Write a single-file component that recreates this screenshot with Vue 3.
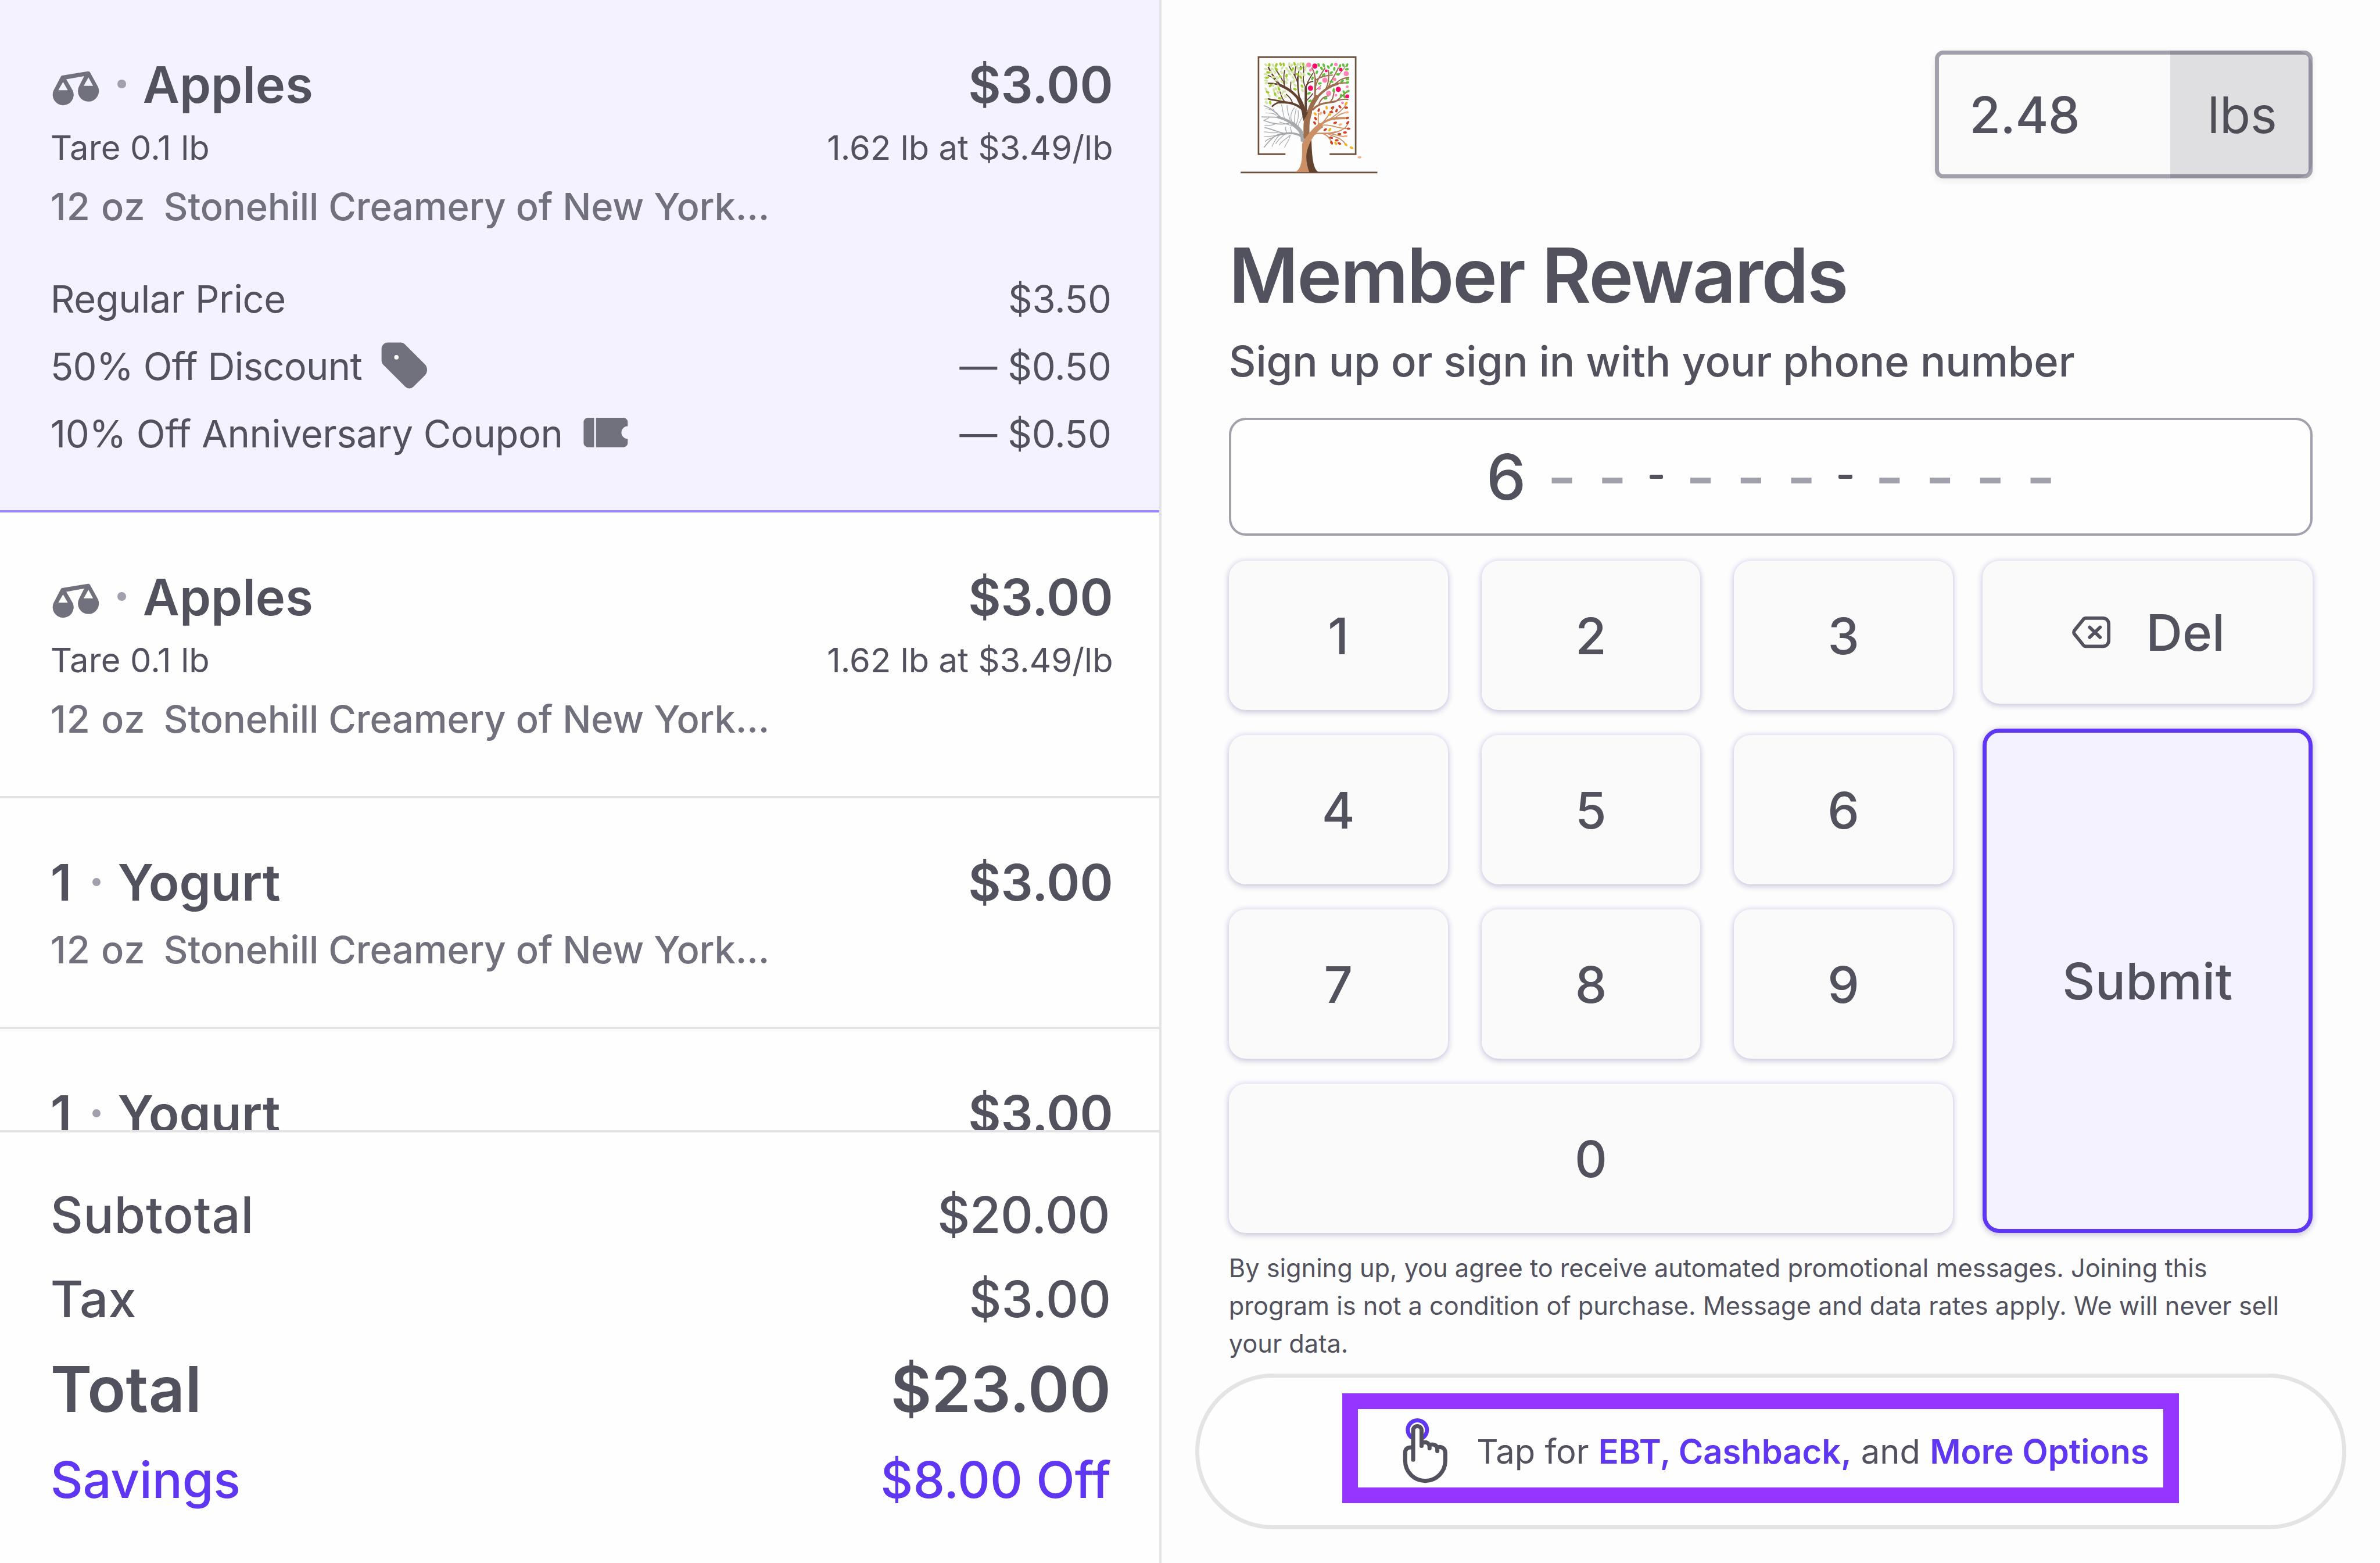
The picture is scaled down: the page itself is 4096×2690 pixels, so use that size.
<template>
  <div class="checkout">
    <section class="cart">
      <div class="cart-items">
        <article
          v-for="(item, index) in items"
          :key="index"
          class="item"
          :class="{ 'item-active': item.active }"
        >
          <div class="item-head">
            <svg v-if="item.weighed" class="icon" viewBox="0 0 24 24">
              <path
                fill="currentColor"
                fill-rule="evenodd"
                d="M5.5 8 17.8 6q.7-.1 1 .5l3.7 6.7A5 5 0 1 1 13.6 13.1L16 8.3 7.5 9.8l3.1 5.4A5 5 0 1 1 1.5 15L4.8 8.7q.2-.6.7-.7ZM5.95 11.1 3.7 15h4.5ZM18.05 8.9l-2.3 4h4.5Z"
              />
            </svg>
            <span v-else class="item-qty">{{ item.qty }}</span>
            <span class="dot"></span>
            <h3 class="item-name">{{ item.name }}</h3>
            <span class="item-price">{{ item.price }}</span>
          </div>
          <div v-if="item.weighed" class="item-tare">
            <span>Tare 0.1 lb</span>
            <span class="item-rate">1.62 lb at $3.49/lb</span>
          </div>
          <div class="item-detail">
            <span class="item-size">12 oz</span>
            <span>Stonehill Creamery of New York...</span>
          </div>
          <div v-if="item.active" class="discounts">
            <div class="discount">
              <span>Regular Price</span>
              <span class="discount-amount">$3.50</span>
            </div>
            <div class="discount">
              <span class="discount-tight">50% Off Discount</span>
              <svg class="icon" viewBox="0 0 24 24">
                <path
                  fill="currentColor"
                  d="M4 1h6.3a2.6 2.6 0 0 1 1.8.8l9.5 9.5a3.9 3.9 0 0 1 0 5.4l-5.4 5.3a2.7 2.7 0 0 1-3.9 0L1.9 11.6A2.9 2.9 0 0 1 1 9.5V4a3 3 0 0 1 3-3Z"
                />
                <circle cx="8.1" cy="8" r="1.05" fill="#ffffff" />
              </svg>
              <span class="discount-amount">— $0.50</span>
            </div>
            <div class="discount">
              <span>10% Off Anniversary Coupon</span>
              <svg class="icon" viewBox="0 0 24 24">
                <path fill="currentColor" d="M3.5 5h3v14h-3a2 2 0 0 1-2-2V7a2 2 0 0 1 2-2Z" />
                <path
                  fill="currentColor"
                  d="M7.4 5h13.1a2 2 0 0 1 2 2v2a3 3 0 0 0 0 6v2a2 2 0 0 1-2 2H7.4Z"
                />
              </svg>
              <span class="discount-amount">— $0.50</span>
            </div>
          </div>
        </article>
      </div>

      <footer class="totals">
        <div v-for="row in totals" :key="row.label" class="total-row" :class="row.type">
          <span>{{ row.label }}</span>
          <span>{{ row.value }}</span>
        </div>
      </footer>
    </section>

    <section class="rewards">
      <header class="rewards-header">
        <svg class="logo" viewBox="120 108 900 720">
          <g fill="none" stroke="#6d4e38" stroke-width="9">
            <path d="M443 700H289V146H844V700H695" />
            <path d="M187 805H968" />
          </g>

          <!-- winter -->
          <g fill="none" stroke="#a7aaad" stroke-linecap="round">
            <path stroke-width="22" d="M541 620C540 565 515 550 482 525" />
            <path stroke-width="14" d="M520 560C480 515 440 500 400 488" />
            <path stroke-width="12" d="M535 600C500 572 440 580 400 590" />
            <path stroke-width="6" d="M440 505C400 480 350 490 308 487M420 495C390 465 360 435 322 424M470 520C420 540 350 520 322 508M400 590C370 600 345 630 322 660M430 580C390 570 360 555 326 548" />
            <path stroke-width="4" d="M400 470C380 450 340 440 330 440M390 478C370 460 350 468 330 464M350 490C340 500 325 502 318 506M380 530C360 535 340 540 325 537M400 575C370 585 340 572 322 572M390 592C360 600 340 596 322 600M380 600C360 612 340 610 328 628M410 590C385 610 375 640 366 656M440 585C410 610 395 625 388 640M470 590C450 615 420 620 408 648M470 595C462 630 448 636 438 660M440 500C425 470 430 440 420 418M470 510C465 480 450 450 452 420M480 515C465 480 480 450 494 435M495 530C490 490 500 465 504 440M505 530C515 500 520 480 515 450M515 540C520 515 535 500 540 486M480 540C470 530 440 530 410 516M430 500C420 485 400 490 370 440M445 545C440 560 445 565 450 575M470 545C475 560 475 570 480 578" />
          </g>

          <!-- spring -->
          <g fill="none" stroke="#63432f" stroke-linecap="round">
            <path stroke-width="24" d="M553 490C550 450 538 420 520 385" />
            <path stroke-width="15" d="M528 400C500 355 460 325 410 305" />
            <path stroke-width="13" d="M545 450C505 405 450 402 410 404" />
            <path stroke-width="13" d="M559 470V320" />
            <path stroke-width="9" d="M523 385C515 340 512 300 513 260M415 308C390 280 370 255 346 205M430 312C400 296 370 296 346 296M420 404C395 402 380 415 368 426M440 402C405 395 375 390 346 385" />
            <path stroke-width="6" d="M513 280C515 240 520 215 530 198M510 285C500 250 480 230 464 198M498 255C495 230 498 215 502 200M438 312C435 280 395 230 384 210M438 300C432 270 434 240 438 222M474 335C470 315 473 300 474 288M395 292C380 265 360 255 344 250M559 320C535 280 550 240 547 200M560 325C565 290 580 270 598 240M563 310C570 295 585 285 600 284M563 395C575 380 590 370 598 354M440 402C420 380 418 360 412 344M485 412C475 380 465 375 448 358" />
          </g>

          <!-- summer -->
          <g fill="none" stroke="#9c6e4d" stroke-linecap="round">
            <path stroke-width="34" d="M563 600C563 540 560 510 578 460" />
            <path stroke-width="26" d="M572 500C582 440 595 410 620 375" />
            <path stroke-width="14" d="M605 400C640 350 690 310 740 298" />
            <path stroke-width="11" d="M600 445C640 400 690 410 730 398" />
            <path stroke-width="10" d="M608 400C615 350 612 310 614 270" />
            <path stroke-width="7" d="M730 300C755 290 780 294 800 292M720 305C750 275 770 265 804 262M685 325C700 280 730 245 744 208M614 280C612 245 605 225 594 208M616 310C625 270 650 240 668 208M620 275C645 255 680 250 710 248M675 325C690 290 692 250 688 222M710 402C745 395 770 380 800 388M735 395C760 375 780 355 792 345M700 400C720 380 715 360 722 340M635 410C650 380 665 370 690 366" />
            <path stroke-width="4" d="M614 335C625 325 635 320 645 308M745 250C760 230 775 215 785 200" />
          </g>

          <!-- trunk and autumn -->
          <path fill="#63432f" d="M544 515C546 485 540 470 536 450L572 460C566 480 552 495 544 515Z" />
          <path fill="#63432f" d="M580 600H591C593 700 598 785 633 803H556C548 720 560 640 580 600Z" />
          <path fill="#cd8f66" d="M497 803C545 780 537 700 538 640C560 600 590 560 640 520L660 545C620 570 590 610 575 655C555 700 560 750 579 803Z" />
          <g fill="none" stroke="#cd8f66" stroke-linecap="round">
            <path stroke-width="13" d="M635 540C675 500 720 492 780 494" />
            <path stroke-width="9" d="M610 584C640 575 680 590 730 574" />
            <path stroke-width="6" d="M660 515C690 480 700 460 718 436M700 497C740 470 775 440 788 418M730 490C750 470 770 465 795 461M632 535C628 505 630 490 632 466M650 535C690 525 730 550 790 553M720 577C760 570 790 550 798 528M700 583C740 590 760 600 786 600M660 584C690 595 690 610 712 634M690 586C730 605 760 605 786 642" />
          </g>

          <g v-for="group in leaves" :key="group.color" :fill="group.color">
            <ellipse
              v-for="([x, y, angle], i) in group.at"
              :key="i"
              rx="11"
              ry="6.5"
              :transform="`translate(${x} ${y}) rotate(${angle})`"
            />
          </g>
          <circle
            v-for="([x, y, r, color], i) in blossoms"
            :key="i"
            :cx="x"
            :cy="y"
            :r="r"
            :fill="color"
          />
        </svg>

        <div class="scale">
          <span class="scale-value">2.48</span>
          <span class="scale-unit">lbs</span>
        </div>
      </header>

      <h1 class="title">Member Rewards</h1>
      <p class="subtitle">Sign up or sign in with your phone number</p>

      <div class="phone">
        <template v-for="(char, i) in phone" :key="i">
          <span v-if="char === '|'" class="phone-separator"></span>
          <span v-else :class="{ 'phone-empty': char === '-' }">{{ char }}</span>
        </template>
      </div>

      <div class="keypad">
        <div class="digits">
          <button v-for="n in digits" :key="n" class="key key-digit" :class="{ 'key-zero': n === 0 }">
            {{ n }}
          </button>
        </div>
        <div class="actions">
          <button class="key key-delete">
            <svg
              class="delete-icon"
              viewBox="0 0 20 20"
              fill="none"
              stroke="currentColor"
              stroke-width="1.6"
              stroke-linecap="round"
              stroke-linejoin="round"
            >
              <path d="M7.4 3.3h8.2a2.7 2.7 0 0 1 2.7 2.7v8a2.7 2.7 0 0 1-2.7 2.7H7.4a1.6 1.6 0 0 1-1.2-.6L2 10.9a1.4 1.4 0 0 1 0-1.8l4.2-5.2a1.6 1.6 0 0 1 1.2-.6Z" />
              <path d="m9.2 7.6 5 4.8M14.2 7.6l-5 4.8" />
            </svg>
            Del
          </button>
          <button class="key key-submit">Submit</button>
        </div>
      </div>

      <p class="disclaimer">
        By signing up, you agree to receive automated promotional messages. Joining this
        program is not a condition of purchase. Message and data rates apply. We will never sell
        your data.
      </p>

      <div class="more">
        <svg
          class="tap-icon"
          viewBox="0 0 32 32"
          fill="none"
          stroke="currentColor"
          stroke-width="1.95"
          stroke-linecap="round"
          stroke-linejoin="round"
        >
          <path class="tap-ring" d="M8.7 9.2a4.55 4.55 0 1 1 6 0" />
          <path d="M9.7 20V6a2 2 0 0 1 4 0v7.4" />
          <path d="M14.2 12c1.6-.8 3.3.1 3.3 1.8v.8M17.8 12.9c1.7-.6 3.4.3 3.4 2v1M21.5 14.1c1.9-.6 3.5.7 3.5 2.6v3.8a9.55 9.55 0 0 1-19.1 0v-4c0-1.6 1-2.4 2.8-2.4" />
        </svg>
        <p class="more-text">
          Tap for <strong>EBT, Cashback,</strong> and <strong>More Options</strong>
        </p>
        <div class="highlight"></div>
      </div>
    </section>
  </div>
</template>

<script setup>
const items = [
  { name: 'Apples', price: '$3.00', weighed: true, active: true },
  { name: 'Apples', price: '$3.00', weighed: true },
  { name: 'Yogurt', price: '$3.00', qty: 1 },
  { name: 'Yogurt', price: '$3.00', qty: 1 }
]

const totals = [
  { label: 'Subtotal', value: '$20.00', type: 'subtotal' },
  { label: 'Tax', value: '$3.00', type: 'tax' },
  { label: 'Total', value: '$23.00', type: 'total' },
  { label: 'Savings', value: '$8.00 Off', type: 'savings' }
]

// '|' is the separator between groups of the number
const phone = '6--|---|----'.split('')

const digits = [1, 2, 3, 4, 5, 6, 7, 8, 9, 0]

// x, y, angle
const leaves = [
  {
    color: '#d3e3a9',
    at: [
      [332, 190, 40], [372, 192, 60], [332, 214, 20], [368, 214, 30], [388, 198, 130], [330, 243, 10],
      [332, 262, 0], [332, 279, 5], [334, 293, -20], [360, 232, 50], [382, 232, 60], [372, 260, 20],
      [396, 262, 40], [392, 278, 20], [420, 232, 60], [424, 208, 120], [450, 212, 60], [464, 186, 100],
      [478, 192, 120], [512, 188, 110], [528, 184, 120], [484, 232, 50], [468, 243, 20], [462, 226, 40],
      [512, 208, 60], [532, 240, 60], [556, 214, 70], [562, 196, 110], [452, 272, 50], [422, 286, 50],
      [486, 262, 60], [484, 288, 30], [498, 306, 40], [492, 282, 120], [536, 282, 70], [540, 336, 60],
      [526, 214, 120], [374, 306, 110], [376, 334, 80], [388, 326, 60], [400, 348, 80], [390, 366, 60],
      [436, 342, 0], [424, 354, 130], [442, 370, 60], [332, 330, 60], [350, 366, 60], [334, 386, 0],
      [334, 406, 40], [402, 312, 60], [448, 290, 60], [550, 246, 80]
    ]
  },
  {
    color: '#9fca2a',
    at: [
      [351, 190, 90], [391, 190, 110], [415, 186, 70], [433, 188, 80], [344, 233, 15], [338, 263, -15],
      [391, 214, 40], [413, 256, 50], [449, 252, 100], [484, 214, 120], [495, 184, 70], [545, 187, 85],
      [533, 209, 120], [530, 260, 60], [512, 243, 0], [357, 309, -40], [341, 346, 30], [383, 356, 80],
      [406, 328, 60], [411, 381, 15], [356, 406, 80], [497, 329, 25], [538, 312, 60]
    ]
  },
  {
    color: '#5fbf3a',
    at: [
      [633, 190, 70], [662, 192, 70], [649, 210, 60], [688, 202, 60], [706, 190, 120], [722, 212, 95],
      [774, 192, 70], [795, 191, 110], [754, 196, 110], [794, 215, -15], [705, 234, -30], [743, 244, 5],
      [661, 246, -30], [622, 232, 110], [577, 242, 35], [597, 267, 110], [706, 286, 10], [767, 283, -30],
      [797, 272, -15], [797, 290, -10], [639, 296, -10], [577, 352, -25], [583, 396, -30], [672, 381, -15],
      [718, 334, 105], [760, 366, 100], [777, 346, 60], [799, 341, -25], [780, 371, 60]
    ]
  },
  {
    color: '#cf4527',
    at: [
      [712, 434, -30], [754, 429, 50], [790, 434, -5], [633, 448, 105], [735, 451, 110], [705, 460, 10],
      [665, 461, 80], [796, 493, -15], [615, 497, 60], [610, 522, 55], [727, 521, -20], [799, 520, -50],
      [670, 560, -35], [803, 554, 0], [783, 576, -5], [751, 585, 0], [704, 606, 20], [736, 621, -5],
      [706, 635, 60], [751, 639, 25]
    ]
  },
  {
    color: '#f2b41c',
    at: [
      [790, 410, -50], [678, 434, 85], [613, 470, 40], [695, 474, 10], [696, 560, 120], [730, 638, 60],
      [788, 645, 45], [820, 663, 25]
    ]
  },
  {
    color: '#fbb184',
    at: [[644, 467, -40], [794, 461, -5], [756, 531, -20], [786, 597, 0], [866, 718, -5]]
  }
]

// x, y, radius, color
const blossoms = [
  [576, 190, 14, '#ff84b3'], [611, 197, 15, '#fb0a6a'], [586, 220, 8, '#ff84b3'], [731, 188, 10, '#ff84b3'],
  [676, 224, 8, '#fb0a6a'], [759, 217, 10, '#fb0a6a'], [790, 240, 15, '#ff84b3'], [668, 277, 15, '#ff84b3'],
  [724, 272, 10, '#ff84b3'], [586, 323, 15, '#fb0a6a'], [636, 324, 9, '#ff84b3'], [745, 330, 15, '#fb0a6a'],
  [796, 315, 8, '#ff84b3'], [690, 353, 15, '#ff84b3'], [731, 363, 8, '#ff84b3'], [796, 370, 11, '#fb0a6a'],
  [769, 407, 8, '#ff84b3']
]
</script>

<style>
html {
  /* 1rem = 10 units of the 1133 wide tablet layout */
  font-size: calc(100vw / 113.3);
}

body {
  margin: 0;
}
</style>

<style scoped>
* {
  box-sizing: border-box;
}

.checkout {
  display: flex;
  width: 100vw;
  height: 100vh;
  overflow: hidden;
  background: #fdfdfd;
  color: #52525e;
  font-family: 'Inter', sans-serif;
  font-size: 2.4rem;
}

h1,
h3,
p {
  margin: 0;
}

.cart {
  display: flex;
  flex-direction: column;
  flex: none;
  width: 55.3rem;
  background: #fefefe;
  border-right: 4px solid #e4e4e7;
}

.cart-items {
  flex: 1;
  min-height: 0;
  overflow: hidden;
}

.item {
  display: flex;
  flex-direction: column;
  gap: 0.2rem;
  padding: 2.4rem 2.2rem calc(2.4rem - 4px) 2.4rem;
  border-bottom: 4px solid #e4e4e7;
}

.item-active {
  background: #f4f2ff;
  border-bottom-color: #9b89fd;
}

.item-head {
  display: flex;
  align-items: center;
  height: 3.2rem;
  line-height: 3.2rem;
  font-weight: 600;
}

.icon {
  flex: none;
  width: 2.4rem;
  height: 2.4rem;
  color: #71717e;
}

.item-qty {
  width: 1.2rem;
}

.dot {
  width: 0.4rem;
  height: 0.4rem;
  margin: 0 0.8rem;
  border-radius: 50%;
  background: #a1a1ae;
}

.item-name {
  font-size: 2.4rem;
  font-weight: 600;
}

.item-price {
  margin-left: auto;
}

.item-qty,
.item-name,
.item-price {
  padding-top: 0.06rem;
}

.item-tare {
  display: flex;
  justify-content: space-between;
  height: 2.4rem;
  font-size: 1.6rem;
  line-height: 2.44rem;
  letter-spacing: 0.005rem;
}

.item-rate {
  letter-spacing: 0.002rem;
}

.item-detail {
  display: flex;
  gap: 0.86rem;
  height: 2.8rem;
  color: #71717e;
  font-size: 1.8rem;
  font-weight: 500;
  line-height: 2.88rem;
  letter-spacing: -0.006rem;
}

.item-size {
  letter-spacing: 0.026rem;
}

.discounts {
  display: flex;
  flex-direction: column;
  gap: 0.4rem;
  margin-top: 1.4rem;
}

.discount {
  display: flex;
  align-items: center;
  gap: 0.84rem;
  height: 2.8rem;
  padding-right: 0.08rem;
  font-size: 1.8rem;
  letter-spacing: -0.011rem;
}

.discount span {
  padding-top: 0.08rem;
}

.discount-tight {
  letter-spacing: -0.02rem;
}

.discount-amount {
  margin-left: auto;
  letter-spacing: -0.006rem;
}

.totals {
  display: flex;
  flex-direction: column;
  gap: 0.8rem;
  flex: none;
  height: 20.6rem;
  padding: calc(2.43rem - 4px) 2.3rem 0 2.4rem;
  background: #fefefe;
  border-top: 4px solid #e4e4e7;
  font-weight: 500;
}

.total-row {
  display: flex;
  justify-content: space-between;
  line-height: 3.2rem;
}

.subtotal {
  padding-right: 0.05rem;
}

.subtotal span:first-child {
  letter-spacing: 0.022rem;
}

.subtotal span:last-child {
  letter-spacing: -0.01rem;
}

.total {
  font-size: 3rem;
  font-weight: 600;
  line-height: 3.8rem;
}

.total span:first-child {
  letter-spacing: 0.01rem;
}

.savings {
  color: #5f37f3;
}

.savings span:first-child {
  letter-spacing: -0.005rem;
}

.rewards {
  display: flex;
  flex-direction: column;
  flex: 1;
  padding: 2.4rem 3.2rem 0;
}

.rewards-header {
  display: flex;
  justify-content: space-between;
  align-items: flex-start;
  height: 6.1rem;
}

.logo {
  width: 7.5rem;
  height: 6rem;
}

.scale {
  display: flex;
  width: 18rem;
  height: 6.1rem;
  border: 7px solid #a1a1ae;
  border-radius: 0.4rem;
  background: #fafafb;
  box-shadow: 0 0.1rem 0.3rem rgba(24, 24, 40, 0.08);
  line-height: calc(6.16rem - 14px);
}

.scale-value {
  flex: 1;
  padding-left: 1.46rem;
  font-weight: 500;
  letter-spacing: -0.01rem;
}

/* tints the frame as well as the field */
.scale-unit {
  width: 6.8rem;
  margin: -7px;
  padding-left: 0.08rem;
  border-radius: 0 0.8rem 0.8rem 0;
  background: rgba(10, 10, 30, 0.11);
  color: #4e4e59;
  line-height: 6.16rem;
  text-align: center;
}

.title {
  margin-top: 2.4rem;
  font-size: 3.6rem;
  font-weight: 600;
  line-height: 4.4rem;
  letter-spacing: -0.071rem;
}

.subtitle {
  margin-top: 0.5rem;
  font-size: 2rem;
  font-weight: 500;
  line-height: 2.8rem;
  letter-spacing: -0.003rem;
}

.phone {
  display: flex;
  align-items: center;
  justify-content: center;
  gap: 1.012rem;
  height: 5.6rem;
  margin-top: 1.3rem;
  border: 4px solid #a1a1ae;
  border-radius: 0.8rem;
  background: #fefefe;
  font-size: 3rem;
  font-weight: 500;
}

.phone-empty {
  color: #a1a1ae;
}

.phone-separator {
  width: 0.65rem;
  height: 0.21rem;
  margin: 0 0.07rem;
  border-radius: 0.06rem;
  background: #52525e;
}

.keypad {
  display: flex;
  gap: 1.4rem;
  height: 32rem;
  margin-top: 1.2rem;
}

.digits {
  display: grid;
  grid-template-columns: repeat(3, 1fr);
  grid-template-rows: repeat(4, 1fr);
  column-gap: 1.6rem;
  row-gap: 1.2rem;
  width: 34.47rem;
}

.actions {
  display: flex;
  flex-direction: column;
  flex: 1;
  gap: 1.2rem;
}

.key {
  display: flex;
  align-items: center;
  justify-content: center;
  margin: 0;
  padding: 0;
  border: none;
  border-radius: 0.8rem;
  background: #fafafb;
  box-shadow:
    0 0 0.3rem rgba(95, 55, 243, 0.15),
    0 0.1rem 0.3rem rgba(39, 39, 80, 0.19);
  color: inherit;
  font-family: inherit;
  font-size: 2.4rem;
  font-weight: 500;
}

.key-digit {
  padding-top: 0.06rem;
}

.key-zero {
  grid-column: span 3;
}

.key-delete {
  gap: 1.6rem;
  height: 6.8rem;
}

.delete-icon {
  width: 2rem;
  height: 2rem;
}

.key-submit {
  flex: 1;
  border: 7px solid #5f37f3;
  background: #f4f2ff;
  letter-spacing: 0.015rem;
}

.disclaimer {
  width: 50.8rem;
  margin-top: 0.78rem;
  font-size: 1.2rem;
  line-height: 1.8rem;
  letter-spacing: -0.0012rem;
}

.more {
  position: relative;
  display: flex;
  align-items: center;
  justify-content: center;
  gap: 0.8rem;
  flex: none;
  height: 7.4rem;
  margin: 0.52rem -1.6rem 0;
  border: 7px solid #e4e4e7;
  border-radius: 3.7rem;
  background: #fefefe;
}

.tap-icon {
  width: 3.2rem;
  height: 3.2rem;
}

.tap-ring {
  stroke: #5f37f3;
}

.more-text {
  font-size: 1.6rem;
  line-height: 2.4rem;
}

.more-text strong {
  color: #5f37f3;
  font-weight: 600;
}

/* frame drawn over the pill */
.highlight {
  position: absolute;
  top: 0.73rem;
  left: 6.8rem;
  width: 39.84rem;
  height: 5.24rem;
  border: 0.76rem solid #9436ff;
}
</style>
